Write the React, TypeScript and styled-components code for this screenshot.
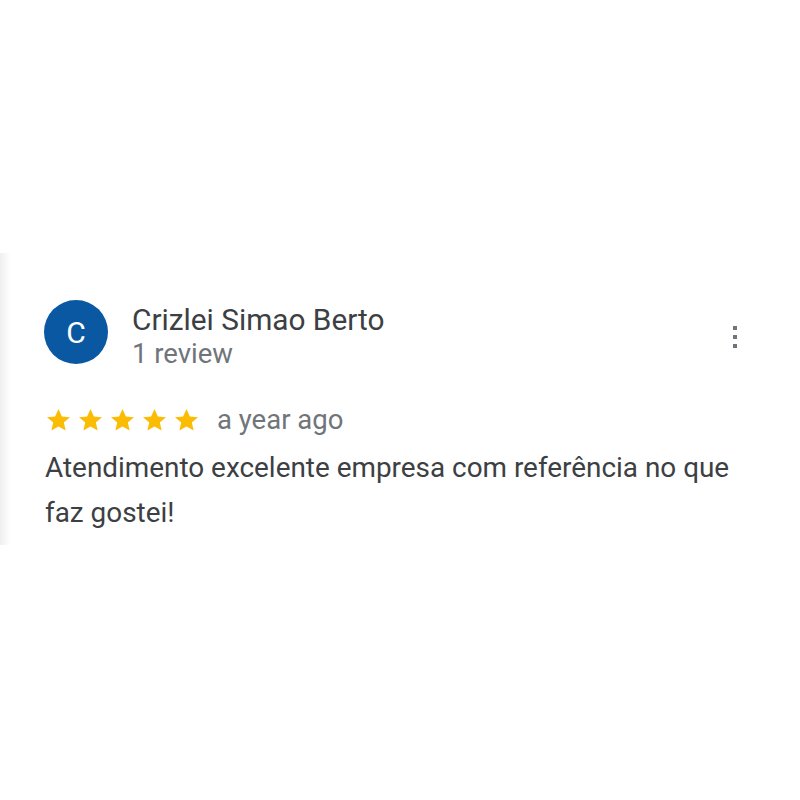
import React from "react";
import styled, { createGlobalStyle } from "styled-components";

const GlobalStyle = createGlobalStyle`
  html, body {
    margin: 0;
    padding: 0;
    background: #ffffff;
  }
  body {
    font-family: Roboto, "Liberation Sans", Arial, sans-serif;
  }
`;

const Page = styled.div`
  width: 800px;
  height: 800px;
  padding-top: 253px;
  box-sizing: border-box;
`;

const Card = styled.div`
  width: 800px;
  height: 292px;
  box-sizing: border-box;
  padding: 40px 44px 0 44px;
  background: linear-gradient(to right, #efefef 0px, #fbfbfb 8px, #ffffff 12px);
`;

const Header = styled.div`
  display: flex;
  align-items: center;
`;

const Avatar = styled.div`
  width: 64px;
  height: 64px;
  border-radius: 50%;
  background: #0b58a2;
  color: #ffffff;
  display: flex;
  align-items: center;
  justify-content: center;
  font-size: 30px;
  flex-shrink: 0;
`;

const Who = styled.div`
  display: flex;
  flex-direction: column;
  margin-left: 24px;
  margin-top: 10px;
  flex: 1;
`;

const Name = styled.div`
  font-size: 29.8px;
  line-height: 34px;
  color: #3c4043;
`;

const Meta = styled.div`
  font-size: 27.5px;
  line-height: 34px;
  color: #70757a;
`;

const MenuButton = styled.div`
  display: flex;
  flex-direction: column;
  gap: 5px;
  margin-right: 19px;
  margin-top: 10px;
`;

const Dot = styled.span`
  width: 4px;
  height: 4px;
  background: #70757a;
  display: block;
`;

const RatingRow = styled.div`
  display: flex;
  align-items: center;
  margin-top: 33px;
  height: 32px;
`;

const Stars = styled.div`
  display: flex;
  gap: 5px;
  margin-left: 1px;
`;

const When = styled.span`
  font-size: 27.5px;
  line-height: 32px;
  color: #70757a;
  margin-left: 17px;
`;

const Body = styled.p`
  margin: 9px 0 0 1px;
  font-size: 27.9px;
  line-height: 45px;
  color: #3c4043;
  max-width: 700px;
`;

const Star = () => (
  <svg width="27" height="26" viewBox="0 0 24 24">
    <path
      fill="#fbbc04"
      d="M12 1.8l3.1 6.9 7.5.7-5.7 5 1.7 7.4L12 17.9l-6.6 3.9 1.7-7.4-5.7-5 7.5-.7z"
    />
  </svg>
);

export default function App() {
  return (
    <>
      <GlobalStyle />
      <Page>
        <Card>
          <Header>
            <Avatar>C</Avatar>
            <Who>
              <Name>Crizlei Simao Berto</Name>
              <Meta>1 review</Meta>
            </Who>
            <MenuButton>
              <Dot />
              <Dot />
              <Dot />
            </MenuButton>
          </Header>
          <RatingRow>
            <Stars>
              {[0, 1, 2, 3, 4].map((i) => (
                <Star key={i} />
              ))}
            </Stars>
            <When>a year ago</When>
          </RatingRow>
          <Body>Atendimento excelente empresa com referência no que faz gostei!</Body>
        </Card>
      </Page>
    </>
  );
}
